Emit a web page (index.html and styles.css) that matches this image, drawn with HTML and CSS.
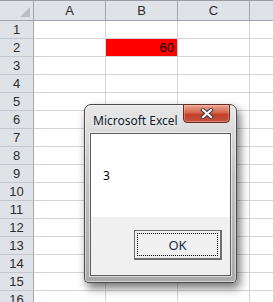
FILE: index.html
```html
<!DOCTYPE html>
<html lang="ja">
<head>
    <meta charset="UTF-8">
    <title>Microsoft Excel</title>
    <link rel="stylesheet" href="styles.css">
</head>
<body>
    <div class="sheet">
        <div class="corner"><span class="tri"></span></div>
        <div class="col-head">A</div>
        <div class="col-head">B</div>
        <div class="col-head">C</div>
        <div class="col-head last"></div>

        <div class="row-head">1</div><div class="cell"></div><div class="cell"></div><div class="cell"></div><div class="cell last"></div>
        <div class="row-head">2</div><div class="cell"></div><div class="cell red">60</div><div class="cell"></div><div class="cell last"></div>
        <div class="row-head">3</div><div class="cell"></div><div class="cell"></div><div class="cell"></div><div class="cell last"></div>
        <div class="row-head">4</div><div class="cell"></div><div class="cell"></div><div class="cell"></div><div class="cell last"></div>
        <div class="row-head">5</div><div class="cell"></div><div class="cell"></div><div class="cell"></div><div class="cell last"></div>
        <div class="row-head">6</div><div class="cell"></div><div class="cell"></div><div class="cell"></div><div class="cell last"></div>
        <div class="row-head">7</div><div class="cell"></div><div class="cell"></div><div class="cell"></div><div class="cell last"></div>
        <div class="row-head">8</div><div class="cell"></div><div class="cell"></div><div class="cell"></div><div class="cell last"></div>
        <div class="row-head">9</div><div class="cell"></div><div class="cell"></div><div class="cell"></div><div class="cell last"></div>
        <div class="row-head">10</div><div class="cell"></div><div class="cell"></div><div class="cell"></div><div class="cell last"></div>
        <div class="row-head">11</div><div class="cell"></div><div class="cell"></div><div class="cell"></div><div class="cell last"></div>
        <div class="row-head">12</div><div class="cell"></div><div class="cell"></div><div class="cell"></div><div class="cell last"></div>
        <div class="row-head">13</div><div class="cell"></div><div class="cell"></div><div class="cell"></div><div class="cell last"></div>
        <div class="row-head">14</div><div class="cell"></div><div class="cell"></div><div class="cell"></div><div class="cell last"></div>
        <div class="row-head">15</div><div class="cell"></div><div class="cell"></div><div class="cell"></div><div class="cell last"></div>
        <div class="row-head">16</div><div class="cell"></div><div class="cell"></div><div class="cell"></div><div class="cell last"></div>
    </div>

    <div class="dialog">
        <div class="titlebar">
            <span class="title">Microsoft Excel</span>
            <span class="close">
                <svg width="14" height="11" viewBox="0 0 14 11">
                    <path d="M3 2 L11 9 M11 2 L3 9" stroke="#3d3d4a" stroke-width="4" stroke-linecap="square"/>
                    <path d="M3 2 L11 9 M11 2 L3 9" stroke="#ffffff" stroke-width="2" stroke-linecap="square"/>
                </svg>
            </span>
        </div>
        <div class="frame">
            <div class="message">3</div>
            <div class="buttons">
                <button class="ok"><span class="focus">OK</span></button>
            </div>
        </div>
    </div>
</body>
</html>
```

FILE: styles.css
```css
html, body {
    margin: 0;
    padding: 0;
    background: #ffffff;
    overflow: hidden;
}
body {
    width: 273px;
    height: 302px;
    position: relative;
    font-family: "Liberation Sans", Arial, sans-serif;
}

.sheet {
    display: grid;
    grid-template-columns: 34px 72px 72px 72px 1fr;
    grid-template-rows: 20px repeat(16, 18px);
    border-top: 1px solid #9a9ea4;
}
.sheet > div {
    box-sizing: border-box;
}
.corner, .col-head {
    background: #dfe3e8;
    border-right: 1px solid #9fa6ae;
    border-bottom: 1px solid #9fa6ae;
}
.corner {
    position: relative;
}
.tri {
    position: absolute;
    right: 3px;
    bottom: 3px;
    width: 0;
    height: 0;
    border-left: 10px solid transparent;
    border-bottom: 10px solid #b9bec5;
}
.col-head {
    font-size: 13px;
    color: #2c2c2c;
    text-align: center;
    line-height: 20px;
}
.col-head.last {
    border-right: none;
}
.row-head {
    background: #dfe3e8;
    border-right: 1px solid #9fa6ae;
    border-bottom: 1px solid #c3c8ce;
    font-size: 13px;
    color: #2c2c2c;
    text-align: center;
    line-height: 18px;
}
.cell {
    border-right: 1px solid #d4d4d4;
    border-bottom: 1px solid #d4d4d4;
}
.cell.last {
    border-right: none;
}
.red {
    background: #ff0000;
    text-align: right;
    font-size: 13px;
    line-height: 18px;
    padding-right: 3px;
    color: #000;
}

/* message box */
.dialog {
    position: absolute;
    left: 84px;
    top: 104px;
    width: 153px;
    height: 179px;
    box-sizing: border-box;
    border: 1px solid #4a4a4a;
    border-radius: 7px 7px 4px 4px;
    background: linear-gradient(#e8e8e8, #c4c4c4 40%, #a9a9a9);
    box-shadow: 3px 5px 10px rgba(0, 0, 0, 0.55), inset 0 0 0 1px rgba(255, 255, 255, 0.5);
    padding: 0 5px 6px 5px;
    display: flex;
    flex-direction: column;
}
.titlebar {
    height: 28px;
    display: flex;
    justify-content: space-between;
    align-items: flex-start;
}
.title {
    font-family: "Noto Sans", sans-serif;
    font-size: 12px;
    color: #101c2c;
    margin: 7px 0 0 3px;
    text-shadow: 0 0 6px rgba(255, 255, 255, 0.9);
}
.close {
    width: 47px;
    height: 19px;
    margin: -1px 1px 0 0;
    box-sizing: border-box;
    border: 1px solid #6b2a1f;
    border-radius: 0 0 4px 4px;
    background: linear-gradient(#e9a694, #d8654d 45%, #c4402a 55%, #c35440);
    box-shadow: inset 0 0 0 1px rgba(255, 220, 210, 0.35);
    display: flex;
    align-items: center;
    justify-content: center;
}
.frame {
    flex: 1;
    border: 1px solid #5e5e5e;
    box-shadow: 0 0 0 1px rgba(255, 255, 255, 0.55);
    display: flex;
    flex-direction: column;
}
.message {
    background: #ffffff;
    height: 83px;
    box-sizing: border-box;
    padding: 33px 0 0 12px;
    font-family: "Noto Sans", sans-serif;
    font-size: 12px;
    color: #000;
}
.buttons {
    flex: 1;
    background: #f0f0f0;
    display: flex;
    justify-content: flex-end;
    align-items: flex-start;
    padding: 13px 8px 0 0;
}
.ok {
    width: 88px;
    height: 30px;
    box-sizing: border-box;
    border: 2px solid #6e6e6e;
    border-top-width: 1px;
    border-left-width: 1px;
    background: #f0f0f0;
    padding: 2px;
    margin: 0;
    display: flex;
}
.focus {
    flex: 1;
    border: 1px dotted #000;
    font-family: "Noto Sans", sans-serif;
    font-size: 13px;
    color: #1a2a40;
    display: flex;
    align-items: center;
    justify-content: center;
}
```
